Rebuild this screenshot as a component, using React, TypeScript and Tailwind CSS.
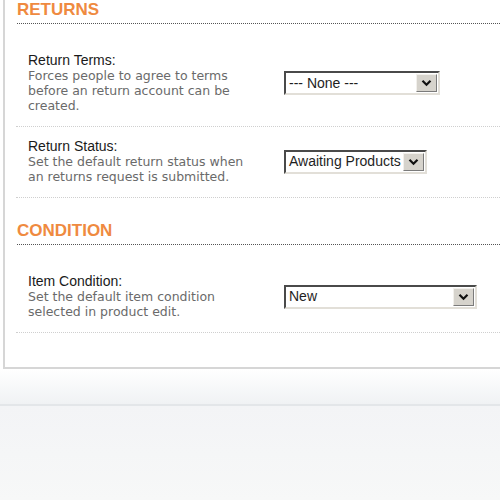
import React from "react";

type Row = { label: string; help: string; value: string; width: string };

const RETURNS: Row[] = [
  { label: "Return Terms:", help: "Forces people to agree to terms before an return account can be created.", value: "--- None ---", width: "w-[156px]" },
  { label: "Return Status:", help: "Set the default return status when an returns request is submitted.", value: "Awaiting Products", width: "w-[143px]" },
];

const CONDITION: Row[] = [
  { label: "Item Condition:", help: "Set the default item condition selected in product edit.", value: "New", width: "w-[193px]" },
];

function Chevron() {
  return (
    <svg width="11" height="8" viewBox="0 0 11 8">
      <path d="M1.5 1.8 L5.5 5.8 L9.5 1.8" fill="none" stroke="#111" strokeWidth="2.2" />
    </svg>
  );
}

// old-school inset select box
function FakeSelect({ value, width }: { value: string; width: string }) {
  return (
    <div
      className={`${width} h-[24px] flex items-center justify-between bg-white border-2 border-t-[#4a4a4a] border-l-[#4a4a4a] border-b-[#e2dfd8] border-r-[#e2dfd8] pl-[3px] pr-[1px]`}
    >
      <span className="text-[14px] text-[#1e1e1e] whitespace-nowrap font-['Liberation_Sans',Arial,sans-serif]">{value}</span>
      <span className="shrink-0 w-[21px] h-[18px] flex items-center justify-center bg-[#d6d3cc] border border-t-[#f2f0ec] border-l-[#f2f0ec] border-b-[#7b7b7b] border-r-[#7b7b7b]">
        <Chevron />
      </span>
    </div>
  );
}

function Heading({ title, className = "" }: { title: string; className?: string }) {
  return (
    <h2
      className={`ml-[1px] pb-[3px] leading-[20px] text-[17px] font-bold text-[#ef8a40] border-b border-dotted border-[#555] font-['Liberation_Sans',Arial,sans-serif] ${className}`}
    >
      {title}
    </h2>
  );
}

function SettingRow({ row }: { row: Row }) {
  return (
    <div className="flex items-center pl-[12px] pt-[12px] pb-[13px] border-b border-dotted border-[#cfcfcf]">
      <div className="w-[232px]">
        <div className="text-[14px] leading-[15px] text-[#1a1a1a] font-['Liberation_Sans',Arial,sans-serif]">{row.label}</div>
        <div className="text-[12.5px] leading-[15px] text-[#6a6a6a] font-['DejaVu_Sans',Verdana,sans-serif]">{row.help}</div>
      </div>
      <div className="ml-[24px]">
        <FakeSelect value={row.value} width={row.width} />
      </div>
    </div>
  );
}

export default function App() {
  return (
    <div className="w-[500px] h-[500px] overflow-hidden bg-white flex flex-col">
      <div className="ml-[3px] pl-[11px] pb-[34px] border-l-2 border-b-2 border-[#d6d6d6]">
        <Heading title="RETURNS" />
        <div className="mt-[17px]">
          {RETURNS.map((r) => (
            <SettingRow key={r.label} row={r} />
          ))}
        </div>
        <Heading title="CONDITION" className="mt-[23px]" />
        <div className="mt-[17px]">
          {CONDITION.map((r) => (
            <SettingRow key={r.label} row={r} />
          ))}
        </div>
      </div>
      <div className="h-[35px] bg-gradient-to-b from-white to-[#f0f2f4]" />
      <div className="flex-1 border-t-2 border-[#e3e6e9] bg-gradient-to-b from-[#f3f4f6] to-[#f7f8f8]" />
    </div>
  );
}
